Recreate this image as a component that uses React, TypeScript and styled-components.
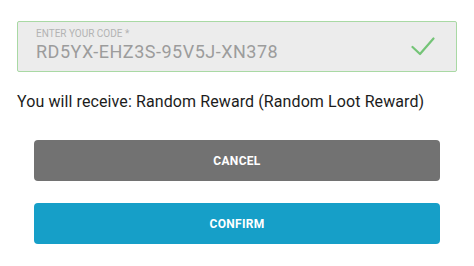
import React from "react";
import styled, { createGlobalStyle } from "styled-components";

const Global = createGlobalStyle`
  html, body { margin: 0; padding: 0; background: #ffffff; }
  body { font-family: Roboto, "Liberation Sans", Arial, sans-serif; }
`;

const Page = styled.div`
  width: 474px;
  height: 266px;
  box-sizing: border-box;
  padding: 21px 17px 0;
  display: flex;
  flex-direction: column;
`;

const CodeField = styled.div`
  box-sizing: border-box;
  height: 51px;
  border: 1px solid #a9d9a4;
  border-radius: 2px;
  background: #ececec;
  display: flex;
  align-items: center;
  padding: 0 21px 0 18px;
`;

const FieldText = styled.div`
  flex: 1;
  display: flex;
  flex-direction: column;
  padding-bottom: 3px;
`;

const FieldLabel = styled.label`
  font-size: 10px;
  line-height: 12px;
  color: #b3b3b3;
  text-transform: uppercase;
`;

const FieldValue = styled.div`
  margin-top: 1px;
  font-size: 18px;
  line-height: 22px;
  letter-spacing: 0.5px;
  color: #9c9c9c;
`;

const Message = styled.p`
  margin: 20px 0 0;
  font-size: 16px;
  line-height: 20px;
  letter-spacing: 0.1px;
  color: #1c1c1c;
`;

const Buttons = styled.div`
  margin-top: 28px;
  padding: 0 17px;
  display: flex;
  flex-direction: column;
  gap: 22px;
`;

const ActionButton = styled.button<{ $tone: "neutral" | "primary" }>`
  height: 41px;
  border: none;
  border-radius: 4px;
  background: ${(p) => (p.$tone === "primary" ? "#169fc8" : "#727272")};
  color: #ffffff;
  font-family: Roboto, "Liberation Sans", Arial, sans-serif;
  font-weight: 700;
  font-size: 12px;
  letter-spacing: 0.3px;
  text-transform: uppercase;
  cursor: pointer;
`;

const Check = () => (
  <svg width="24" height="19" viewBox="0 0 24 19" fill="none">
    <polyline
      points="1.5,10 9,17 22.5,1.5"
      stroke="#74c477"
      strokeWidth="2.2"
      strokeLinecap="round"
      strokeLinejoin="round"
    />
  </svg>
);

export default function App() {
  return (
    <Page>
      <Global />
      <CodeField>
        <FieldText>
          <FieldLabel>Enter your code *</FieldLabel>
          <FieldValue>RD5YX-EHZ3S-95V5J-XN378</FieldValue>
        </FieldText>
        <Check />
      </CodeField>
      <Message>You will receive: Random Reward (Random Loot Reward)</Message>
      <Buttons>
        <ActionButton $tone="neutral">Cancel</ActionButton>
        <ActionButton $tone="primary">Confirm</ActionButton>
      </Buttons>
    </Page>
  );
}
